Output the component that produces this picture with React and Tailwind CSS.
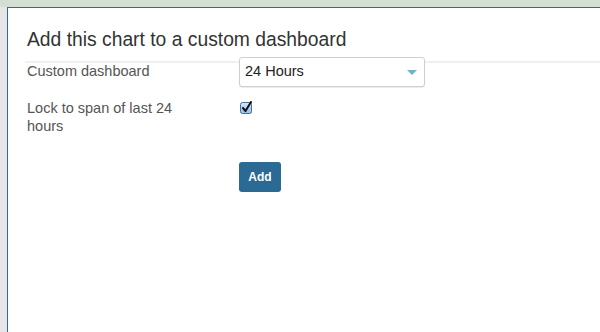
const CheckIcon = () => (
  <svg width="13" height="13" viewBox="0 0 13 13">
    <defs>
      <linearGradient id="cb" x1="0" y1="0" x2="0" y2="1">
        <stop offset="0" stopColor="#d6e8fb" />
        <stop offset="1" stopColor="#8fbcec" />
      </linearGradient>
    </defs>
    <rect x="0.5" y="1.5" width="11" height="11" rx="2" fill="url(#cb)" stroke="#4a6f9a" />
    <path d="M3 7 L5.5 10 L11 1" fill="none" stroke="#111" strokeWidth="2" strokeLinecap="round" strokeLinejoin="round" />
  </svg>
)

export default function App() {
  return (
    <div className="w-[600px] h-[332px] flex flex-col overflow-hidden bg-[#e6e6e6] font-['Liberation_Sans',Arial,sans-serif]">
      <div className="h-[7px] bg-[#d3dfd2] shrink-0"></div>
      <div className="flex flex-1">
        <div className="w-[7px] shrink-0 bg-[#e6e6e6]"></div>
        <div className="flex-1 bg-white border-l border-t border-[#2c6b9c]">
          <div className="pl-[19px] pt-[20px] text-[19.3px] leading-[24px] text-[#333]">
            Add this chart to a custom dashboard
          </div>
          <div className="ml-[17px] mt-[9px] h-[2px] bg-[#f0f0f0]"></div>

          <div className="flex items-start pl-[19px] -mt-[6px] text-[14.5px] text-[#555]">
            <div className="w-[170px] pt-[4px] leading-[20px]">Custom dashboard</div>
            <div className="ml-[42px] w-[186px] h-[30px] bg-white border border-[#cfcfcf] rounded-[3px] shadow-[0_1px_1px_rgba(0,0,0,0.08)] flex items-center justify-between pl-[5px] pr-[7px]">
              <span className="text-[#222]">24 Hours</span>
              <span className="w-0 h-0 border-l-[5px] border-r-[5px] border-t-[5px] border-l-transparent border-r-transparent border-t-[#6bb6c6]"></span>
            </div>
          </div>

          <div className="flex items-start pl-[19px] mt-[12px] text-[14.5px] text-[#555]">
            <div className="w-[170px] leading-[18px]">Lock to span of last 24 hours</div>
            <div className="ml-[43px] mt-[2px]">
              <CheckIcon />
            </div>
          </div>

          <div className="pl-[231px] mt-[27px]">
            <button className="w-[42px] h-[30px] rounded-[3px] bg-[#2a6a94] text-white text-[12px] font-bold">
              Add
            </button>
          </div>
        </div>
      </div>
    </div>
  )
}
